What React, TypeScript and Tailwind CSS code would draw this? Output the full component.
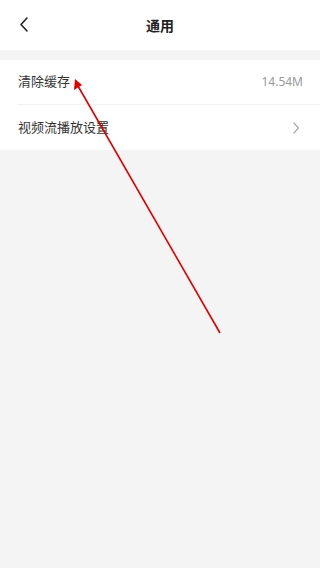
import React from "react";

export default function App() {
  return (
    <div
      className="relative w-[320px] h-[568px] bg-[#f4f4f4] overflow-hidden"
      style={{ fontFamily: '"Noto Sans", "Noto Sans CJK SC", sans-serif' }}
    >
      <div className="h-[50px] bg-white flex items-center relative">
        <div className="absolute left-[18px] top-[15px]">
          <svg width="12" height="20" viewBox="0 0 12 20" fill="none">
            <path d="M9 3 L3 9.5 L9 16" stroke="#222" strokeWidth="1.6" strokeLinecap="round" strokeLinejoin="round" />
          </svg>
        </div>
        <div className="flex-1 text-center text-[14px] font-bold text-[#222] leading-none pt-[2px]">通用</div>
      </div>
      <div className="h-[10px]" />
      <div className="bg-white">
        <div className="ml-[18px] h-[45px] flex items-center pr-[17px] border-b border-[#f2f2f2]">
          <span className="flex-1 text-[13px] text-[#333]">清除缓存</span>
          <span className="text-[12px] text-[#999]">14.54M</span>
        </div>
        <div className="h-[45px] flex items-center pl-[18px] pr-[20px]">
          <span className="flex-1 text-[13px] text-[#333]">视频流播放设置</span>
          <svg width="8" height="14" viewBox="0 0 8 14" fill="none">
            <path d="M2 2 L6.5 7 L2 12" stroke="#aaa" strokeWidth="1.2" strokeLinecap="round" strokeLinejoin="round" />
          </svg>
        </div>
      </div>
      <svg className="absolute left-0 top-0 pointer-events-none" width="320" height="568" viewBox="0 0 320 568">
        <line x1="220" y1="333" x2="78" y2="86" stroke="#e00000" strokeWidth="1.6" />
        <polygon points="75,79 74,90 82,85" fill="#e00000" />
      </svg>
    </div>
  );
}
